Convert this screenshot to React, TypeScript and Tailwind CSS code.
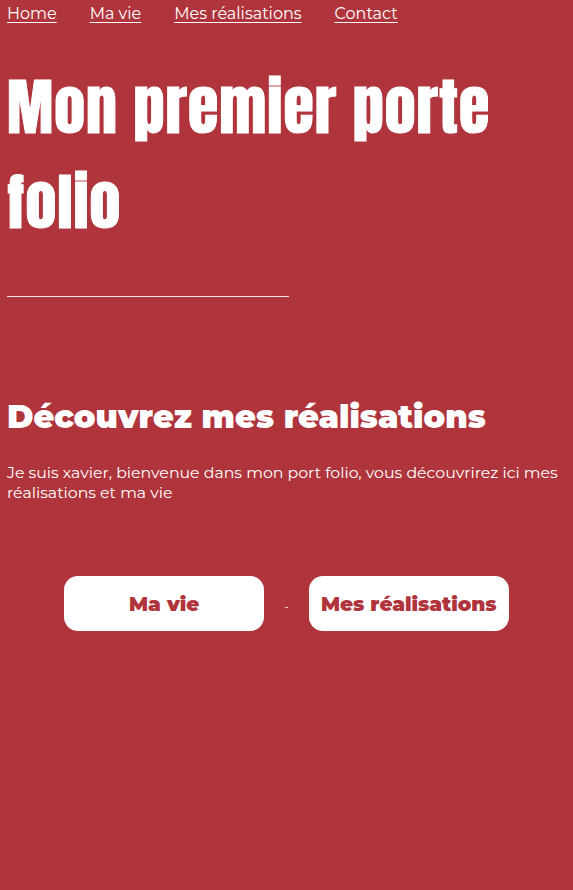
import React from "react";

const links = ["Home", "Ma vie", "Mes réalisations", "Contact"];

export default function App() {
  return (
    <div className="min-h-screen bg-[#b0343c] text-white font-['Montserrat','DejaVu_Sans',sans-serif]">
      <nav className="flex pl-[7px] pt-[3px]">
        {links.map((l) => (
          <a key={l} href="#" className="mr-[33px] text-[16px] leading-[22px] underline underline-offset-[3px] decoration-1">
            {l}
          </a>
        ))}
      </nav>

      <header className="px-[7px]">
        <h1 className="mt-[34px] text-[62px] leading-[95px] font-normal tracking-[1px] font-['Anton','Liberation_Sans_Narrow','DejaVu_Sans_Condensed',sans-serif] [-webkit-text-stroke:1px_white]">
          Mon premier porte folio
        </h1>
        <hr className="mt-[47px] w-[282px] border-t-[1.5px] border-[#e5e7eb]" />
      </header>

      <section className="pl-[7px] mt-[100px]">
        <h2 className="text-[32px] leading-[40px] font-black">Découvrez mes réalisations</h2>
        <p className="mt-[26px] text-[15.75px] leading-[20px]">
          Je suis xavier, bienvenue dans mon port folio, vous découvrirez ici mes réalisations et ma vie
        </p>
      </section>

      <div className="mt-[73px] flex items-baseline justify-center">
        <a href="#" className="w-[200px] h-[55px] rounded-[14px] bg-white text-[#b0343c] text-[20px] font-black flex items-center justify-center">
          Ma vie
        </a>
        <span className="mx-[20px] text-[12px]">-</span>
        <a href="#" className="w-[200px] h-[55px] rounded-[14px] bg-white text-[#b0343c] text-[20px] font-black flex items-center justify-center">
          Mes réalisations
        </a>
      </div>
    </div>
  );
}
